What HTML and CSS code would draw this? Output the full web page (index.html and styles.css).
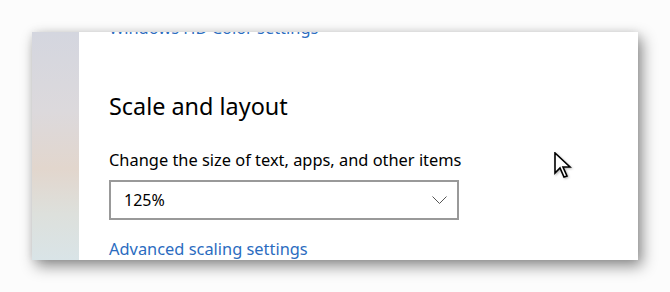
FILE: index.html
```html
<!DOCTYPE html>
<html lang="en">
<head>
    <meta charset="UTF-8">
    <title>Display settings</title>
    <link rel="stylesheet" href="styles.css">
</head>
<body>
    <div class="stage">
        <div class="window">
            <div class="sidebar"></div>
            <div class="content">
                <a class="link link-top" href="#">Windows HD Color settings</a>
                <h2 class="title">Scale and layout</h2>
                <p class="label">Change the size of text, apps, and other items</p>
                <div class="select">
                    <span class="value">125%</span>
                    <svg class="chevron" width="15" height="9" viewBox="0 0 15 9">
                        <polyline points="0.5,0.5 7.5,7.5 14.5,0.5" fill="none" stroke="#555" stroke-width="1"/>
                    </svg>
                </div>
                <a class="link link-bottom" href="#">Advanced scaling settings</a>
            </div>
        </div>
        <svg class="cursor" width="18" height="27" viewBox="0 0 18 27">
            <polygon points="1,1 1,21 6,16 10,25 13,24 9,15 16,15" fill="#fff" stroke="#000" stroke-width="1.6" stroke-linejoin="miter"/>
        </svg>
    </div>
</body>
</html>
```

FILE: styles.css
```css
*{
    margin:0;
    padding:0;
    box-sizing:border-box;
}
body{
    background:#fcfcfc;
    font-family:"Noto Sans", "Open Sans", sans-serif;
    color:#000;
}
.stage{
    position:relative;
    width:670px;
    height:292px;
    padding:32px 0 0 32px;
}
.window{
    display:flex;
    width:606px;
    height:228px;
    overflow:hidden;
    background:#fff;
    box-shadow:4px 6px 14px rgba(0,0,0,0.45), 0 0 8px rgba(0,0,0,0.08);
}
.sidebar{
    width:47px;
    flex-shrink:0;
    background:linear-gradient(180deg, #d4d6df 0%, #dcd9dc 35%, #e2d6cd 60%, #dde0dc 80%, #d9e4e7 100%);
}
.content{
    display:flex;
    flex-direction:column;
    align-items:flex-start;
    padding-left:30px;
}
.link{
    color:#2b6cbf;
    text-decoration:none;
    font-size:16.4px;
    line-height:20px;
}
.link-top{
    margin-top:-14px;
}
.title{
    font-weight:400;
    font-size:23.4px;
    line-height:30px;
    margin-top:53px;
}
.label{
    font-size:16.4px;
    line-height:20px;
    margin-top:29px;
}
.select{
    display:flex;
    align-items:center;
    justify-content:space-between;
    width:350px;
    height:40px;
    border:2px solid #999;
    margin-top:10px;
    padding:0 10px 0 13px;
}
.value{
    font-size:16px;
    line-height:20px;
}
.chevron{
    margin-top:1px;
}
.link-bottom{
    margin-top:19px;
}
.cursor{
    position:absolute;
    left:554px;
    top:152px;
    filter:drop-shadow(1px 1px 1px rgba(0,0,0,0.3));
}
```
